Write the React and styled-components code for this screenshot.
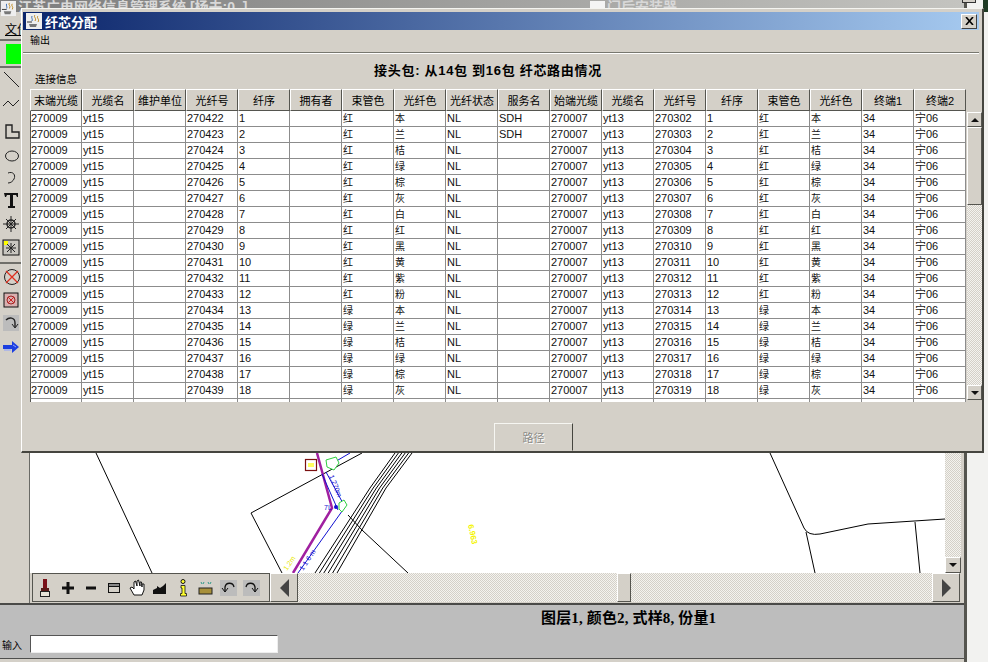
import React from 'react';
import styled, { createGlobalStyle } from 'styled-components';

const SANS = '"Liberation Sans", "Noto Sans CJK SC", sans-serif';
const FACE = '#d4d0c8';

const GlobalStyle = createGlobalStyle`
  html, body { margin: 0; padding: 0; background: #f2f2f0; }
  * { box-sizing: border-box; }
`;

const Desktop = styled.div`
  position: relative;
  width: 988px;
  height: 662px;
  overflow: hidden;
  background: #f2f2f0;
  font-family: ${SANS};
  color: #000;
`;

const MainWindow = styled.div`
  width: 967px;
  height: 662px;
  display: flex;
  flex-direction: column;
  background: ${FACE};
  border-right: 3px solid #55554f;
`;

const MainTitle = styled.div`
  position: relative;
  height: 12px;
  flex: none;
  display: flex;
  align-items: flex-start;
  padding: 1px 0 0 18px;
  background: linear-gradient(90deg, #7d7d7d, #c4c4c0);
  color: #d8d8d8;
  font-size: 14px;
  line-height: 12px;
  font-weight: bold;
  white-space: nowrap;
`;

const TitleSpan = styled.span`
  width: 572px;
  flex: none;
`;

const BackWindowIcon = styled.span`
  width: 15px;
  height: 8px;
  margin-right: 2px;
  flex: none;
  background: #f4f4f4;
`;

const AppIcon = styled.span`
  position: absolute;
  left: 1px;
  top: 1px;
  display: flex;
`;

const TopButton = styled.div`
  position: absolute;
  left: 962px;
  top: -11px;
  width: 14px;
  height: 14px;
  background: ${FACE};
  border: 1px solid #333;
`;

const DesktopCorner = styled.div`
  position: absolute;
  right: 0;
  top: 0;
  width: 5px;
  height: 12px;
  background: #1e3a24;
`;

const Body = styled.div`
  flex: 1;
  display: flex;
  min-height: 0;
`;

const ToolColumn = styled.div`
  width: 30px;
  flex: none;
  display: flex;
  flex-direction: column;
  align-items: flex-start;
  background: ${FACE};
  border-right: 1px solid #6a6a66;
`;

const MenuStub = styled.div`
  width: 22px;
  height: 27px;
  padding: 11px 0 0 5px;
  overflow: hidden;
  white-space: nowrap;
  font-size: 12px;
  line-height: 14px;
  text-decoration: underline;
`;

const ToolSep = styled.div`
  width: 21px;
  height: 2px;
  margin-top: ${(p) => p.$gap || 0}px;
  background: #6f6f6a;
`;

const Swatch = styled.div`
  width: 15px;
  height: 20px;
  margin: 3px 0 2px 6px;
  background: #00ff00;
`;

const ToolIcon = styled.div`
  width: 22px;
  height: 18px;
  flex: none;
  margin-top: ${(p) => p.$gap}px;
  display: flex;
  align-items: center;
  justify-content: center;
`;

const Workspace = styled.div`
  flex: 1;
  min-width: 0;
  display: flex;
  flex-direction: column;
  background: ${FACE};
`;

const MapRow = styled.div`
  flex: 1;
  min-height: 0;
  display: flex;
`;

const MapCanvas = styled.svg`
  width: 915px;
  height: 100%;
  flex: none;
  display: block;
  background: #fff;
`;

const Dither = styled.div`
  background-color: #e4e2dc;
  background-image: repeating-conic-gradient(#d4d0c8 0 25%, #f4f3ef 0 50%);
  background-size: 2px 2px;
`;

const VTrack = styled(Dither)`
  width: 16px;
  flex: none;
  display: flex;
  flex-direction: column;
  justify-content: flex-end;
`;

const BevelButton = styled.div`
  width: ${(p) => p.$w}px;
  height: ${(p) => p.$h}px;
  flex: none;
  display: flex;
  align-items: center;
  justify-content: center;
  background: ${FACE};
  border: 1px solid;
  border-color: #fff #55554f #55554f #fff;
`;

const BottomRow = styled.div`
  height: 30px;
  flex: none;
  display: flex;
  padding-left: 2px;
  background: ${FACE};
`;

const FloatBar = styled.div`
  width: 238px;
  height: 29px;
  flex: none;
  display: flex;
  align-items: center;
  background: ${FACE};
  border: 1px solid #55554f;
`;

const BarIcon = styled.div`
  width: 23px;
  height: 22px;
  flex: none;
  display: flex;
  align-items: center;
  justify-content: center;
`;

const HTrack = styled(Dither)`
  width: 634px;
  height: 29px;
  flex: none;
  position: relative;
`;

const HThumb = styled.div`
  position: absolute;
  left: 319px;
  top: 0;
  width: 14px;
  height: 29px;
  background: ${FACE};
  border: 1px solid;
  border-color: #fff #55554f #55554f #fff;
`;

const StatusBar = styled.div`
  height: 56px;
  flex: none;
  display: flex;
  flex-direction: column;
  background: #bdbdbd;
  border-top: 2px solid #4a4a48;
  border-bottom: 1px solid #4f4f4d;
`;

const StatusFooter = styled.div`
  height: 3px;
  flex: none;
  background: ${FACE};
`;

const StatusText = styled.div`
  height: 30px;
  padding: 3px 0 0 541px;
  font-family: "Liberation Serif", "Noto Sans CJK SC", serif;
  font-size: 15px;
  line-height: 20px;
  font-weight: bold;
  letter-spacing: 0.15px;
  white-space: nowrap;
`;

const InputRow = styled.div`
  display: flex;
  align-items: center;
  padding-left: 2px;
  font-size: 10px;
`;

const InputLabel = styled.span`
  width: 28px;
  flex: none;
`;

const CommandInput = styled.input`
  width: 248px;
  height: 18px;
  padding: 0;
  background: #fff;
  border: 1px solid;
  border-color: #555 #eee #eee #555;
  outline: none;
`;

/* dialog floats over the main window */
const Dialog = styled.div`
  position: absolute;
  left: 21px;
  top: 8px;
  width: 963px;
  height: 445px;
  display: flex;
  flex-direction: column;
  padding: 3px 3px 2px 1px;
  background: ${FACE};
  border-top: 1px solid #f4f4f0;
  border-left: 1px solid #fff;
  border-right: 2px solid #45453f;
  border-bottom: 2px solid #45453f;
`;

const DialogTitle = styled.div`
  height: 18px;
  flex: none;
  display: flex;
  align-items: center;
  gap: 3px;
  padding: 0 2px 0 3px;
  color: #fff;
  font-size: 13px;
  font-weight: bold;
  background: linear-gradient(90deg, #0a246a, #a6caf0);
`;

const TitleText = styled.span`
  flex: 1;
`;

const CloseButton = styled.div`
  width: 16px;
  height: 15px;
  display: flex;
  align-items: center;
  justify-content: center;
  background: ${FACE};
  border: 1px solid;
  border-color: #fff #404040 #404040 #fff;
`;

const DialogMenu = styled.div`
  height: 23px;
  flex: none;
  padding: 4px 0 0 7px;
  font-size: 10px;
  line-height: 14px;
  border-bottom: 1px solid #77776f;
  box-shadow: 0 1px 0 #fff;
`;

const Heading = styled.div`
  height: 36px;
  flex: none;
  position: relative;
  padding: 10px 26px 0 0;
  text-align: center;
  font-size: 13px;
  line-height: 16px;
  font-weight: bold;
  letter-spacing: 0.7px;
`;

const LinkLabel = styled.span`
  position: absolute;
  left: 12px;
  top: 18px;
  font-size: 10.500px;
  font-weight: normal;
  letter-spacing: 0;
`;

const TableArea = styled.div`
  margin-left: 7px;
  height: 313px;
  flex: none;
  display: flex;
`;

const TableClip = styled.div`
  width: 936px;
  height: 313px;
  flex: none;
  overflow: hidden;
  background: #fff;
`;

const GridRow = styled.div`
  display: grid;
  grid-template-columns: repeat(18, 52px);
  height: ${(p) => p.$h}px;
`;

const HeaderCell = styled.div`
  display: flex;
  align-items: center;
  justify-content: center;
  font-size: 11px;
  white-space: nowrap;
  overflow: hidden;
  background: ${FACE};
  border: 1px solid;
  border-color: #fff #55554f #55554f #fff;
`;

const Cell = styled.div`
  padding-left: 1px;
  font-size: ${(p) => (p.$cjk ? 10 : 11)}px;
  line-height: 15px;
  white-space: nowrap;
  overflow: hidden;
  color: #111;
  border-right: 1px solid #8c8c8c;
  border-bottom: 1px solid #8c8c8c;
  &:first-child {
    padding-left: 0;
    border-left: 1px solid #55554f;
  }
`;

const ScrollColumn = styled.div`
  width: 15px;
  height: 311px;
  margin-left: 1px;
  flex: none;
  display: flex;
  flex-direction: column;
  padding-top: 23px;
`;

const ScrollThumb = styled.div`
  height: 78px;
  flex: none;
  background: ${FACE};
  border: 1px solid;
  border-color: #fff #55554f #55554f #fff;
`;

const ScrollRest = styled(Dither)`
  flex: 1;
`;

const ButtonBar = styled.div`
  flex: 1;
  display: flex;
  justify-content: flex-start;
  padding: 21px 0 0 471px;
`;

const DisabledButton = styled.div`
  width: 79px;
  height: 28px;
  display: flex;
  align-items: center;
  justify-content: center;
  font-size: 11px;
  color: #8a8a86;
  text-shadow: 1px 1px 0 #fff;
  background: ${FACE};
  border: 1px solid;
  border-color: #f6f6f2 #45453f ${FACE} #f6f6f2;
`;

const Tri = ({ dir, size = 5, color = '#111' }) => {
  const points = {
    up: `0,${size} ${size},0 ${size * 2},${size}`,
    down: `0,0 ${size * 2},0 ${size},${size}`,
    left: `${size},0 ${size},${size * 2} 0,${size}`,
    right: `0,0 0,${size * 2} ${size},${size}`,
  }[dir];
  const wide = dir === 'up' || dir === 'down';
  return (
    <svg width={wide ? size * 2 : size} height={wide ? size : size * 2}>
      <polygon points={points} fill={color} />
    </svg>
  );
};

const JavaCup = ({ size = 16 }) => (
  <svg width={size} height={size} viewBox="0 0 16 16">
    <rect width="16" height="16" fill="#eee" />
    <path d="M3 11h8l-1 3H4z" fill="#777" />
    <path d="M1 9h5" stroke="#333" />
    <path d="M9 2c-2 2 2 3 0 6M12 3c-2 2 2 3 0 6" stroke="#c08a20" fill="none" />
    <path d="M6 3c-1 2 1 3 0 5" stroke="#3a6ab0" fill="none" />
  </svg>
);

const S = { fill: 'none', stroke: '#222', strokeWidth: 1 };

const sideTools = [
  [3, <svg width="18" height="18" key="line"><path d="M2 1l15 15" {...S} /></svg>],
  [5, <svg width="18" height="18" key="wave"><path d="M1 12l5-5 5 5 6-6" {...S} /></svg>],
  [11, <svg width="18" height="18" key="poly"><path d="M4 2h6v7h7v6H4z" {...S} strokeWidth="1.4" /></svg>],
  [6, <svg width="18" height="18" key="oval"><ellipse cx="10" cy="9" rx="6.5" ry="5" {...S} /></svg>],
  [4, <svg width="18" height="18" key="arc"><path d="M6 4c5-2 8 2 6 6-1 2-3 4-6 4" {...S} /></svg>],
  [4, <svg width="18" height="18" key="text">
    <path d="M2 2h14v4h-1l-1-2h-3v11h2v2H6v-2h2V4H5L4 6H3z" fill="#111" />
  </svg>],
  [6, <svg width="18" height="18" key="star">
    <circle cx="9" cy="9" r="4" {...S} strokeWidth="1.5" />
    <path d="M9 1v16M1 9h16M4 4l10 10M14 4L4 14" {...S} />
  </svg>],
  [6, <svg width="18" height="18" key="boxstar">
    <rect x="1" y="1" width="16" height="15" fill="#c8c6c0" stroke="#111" />
    <rect x="2" y="2" width="4" height="4" fill="#ffff00" />
    <path d="M9 4v10M4 9h10M5 5l8 8M13 5l-8 8" {...S} />
  </svg>],
];

const sideTools2 = [
  [4, <svg width="18" height="18" key="redx">
    <circle cx="10" cy="9" r="7.500" {...S} />
    <path d="M4 3l12 12M16 3L4 15" fill="none" stroke="#e03020" strokeWidth="1.3" />
  </svg>],
  [5, <svg width="18" height="18" key="boxx">
    <rect x="2" y="2" width="14" height="14" fill="#d8b0b0" stroke="#111" />
    <circle cx="9" cy="9" r="4" fill="none" stroke="#a02020" />
    <path d="M6 6l6 6M12 6l-6 6" fill="none" stroke="#d02020" />
  </svg>],
  [5, <svg width="18" height="18" key="redo">
    <rect x="1" y="1" width="16" height="16" fill="#bcbcbc" />
    <path d="M4 6c3-3 9-3 9 3v4" {...S} strokeWidth="1.4" />
    <path d="M10 10l3 4 3-4" {...S} />
  </svg>],
  [6, <svg width="18" height="14" key="arrow">
    <path d="M1 5h9V1l7 6-7 6V9H1z" fill="#1c3fe0" />
    <path d="M2 10h7M11 5l3 2" stroke="#8ca0ff" />
  </svg>],
];

const barTools = [
  <svg width="10" height="20" key="brush">
    <rect x="3" y="1" width="4" height="9" fill="#7a1018" />
    <rect x="1" y="10" width="8" height="3" fill="#5a1a18" />
    <rect x="0.500" y="13.500" width="9" height="5" fill="#e8e4d8" stroke="#222" />
  </svg>,
  <svg width="14" height="14" key="plus"><path d="M7 1v12M1 7h12" stroke="#111" strokeWidth="3" /></svg>,
  <svg width="14" height="14" key="minus"><path d="M2 7h10" stroke="#111" strokeWidth="3" /></svg>,
  <svg width="14" height="14" key="window">
    <rect x="1.500" y="2.500" width="11" height="9" fill="none" stroke="#111" />
    <rect x="1.500" y="2.500" width="11" height="3" fill="#888" stroke="#111" />
  </svg>,
  <svg width="18" height="18" key="hand">
    <path d="M6 16L2 9l2-1 2 2V3l1.500-1L9 7V2l1.500-1L12 7V3l1.500 0L14 8V5l2 0v6l-2 5z" fill="#fff" stroke="#111" />
  </svg>,
  <svg width="15" height="14" key="chart"><path d="M1 13V9l4-2v-2l3 2 3-2 3-3v11z" fill="#111" /></svg>,
  <svg width="10" height="18" key="info">
    <circle cx="5" cy="2.500" r="2" fill="#ffff30" stroke="#111" />
    <path d="M3 6.500h4v8h1.500v2.500h-6v-2.500H4V9H3z" fill="#ffff30" stroke="#111" strokeWidth="0.8" />
  </svg>,
  <svg width="15" height="16" key="ruler">
    <path d="M3 2l1 2M6 2L5 4M10 2l1 2M13 2l-1 2" stroke="#2f9a8a" />
    <rect x="1" y="8" width="13" height="6" fill="#a8903a" stroke="#222" />
  </svg>,
  <svg width="19" height="19" key="undo">
    <rect x="1" y="2" width="17" height="16" fill="#bcbcbc" />
    <path d="M6 14V9c1-5 8-5 9 0" fill="none" stroke="#111" strokeWidth="1.3" />
    <path d="M3 10l3 4 3-4" fill="none" stroke="#111" />
  </svg>,
  <svg width="19" height="19" key="redo">
    <rect x="1" y="2" width="17" height="16" fill="#bcbcbc" />
    <path d="M13 14V9c-1-5-8-5-9 0" fill="none" stroke="#111" strokeWidth="1.3" />
    <path d="M10 10l3 4 3-4" fill="none" stroke="#111" />
  </svg>,
];

const headers = ['末端光缆', '光缆名', '维护单位', '光纤号', '纤序', '拥有者', '束管色', '光纤色', '光纤状态', '服务名', '始端光缆', '光缆名', '光纤号', '纤序', '束管色', '光纤色', '终端1', '终端2'];
const fibreColors = ['本', '兰', '桔', '绿', '棕', '灰', '白', '红', '黑', '黄', '紫', '粉'];

const rows = Array.from({ length: 18 }, (_, i) => {
  const tube = i < 12 ? '红' : '绿';
  const colour = fibreColors[i % 12];
  return [
    '270009', 'yt15', '', String(270422 + i), String(i + 1), '', tube, colour, 'NL',
    i < 2 ? 'SDH' : '', '270007', 'yt13', String(270302 + i), String(i + 1), tube, colour, '34', '宁06',
  ];
});

const CJK_COLS = [6, 7, 14, 15];

// cable bundle, six parallel lines
const bundle = [0, 1, 2, 3, 4, 5].map((i) => (
  `M${395 + i * 3.4} 453L${370 + i * 3.2} 488L${315 + i * 4.4} 573`
));

const App = () => (
  <Desktop>
    <GlobalStyle />
    <DesktopCorner />
    <MainWindow>
      <MainTitle>
        <AppIcon><JavaCup size={15} /></AppIcon>
        <TitleSpan>江苏广电网络信息管理系统 [杨夫:0..]</TitleSpan>
        <BackWindowIcon />
        <span>门后安装器</span>
        <TopButton />
      </MainTitle>
      <Body>
        <ToolColumn>
          <MenuStub>文件</MenuStub>
          <ToolSep />
          <Swatch />
          <ToolSep />
          {sideTools.map(([gap, icon], i) => (
            <ToolIcon key={i} $gap={gap}>{icon}</ToolIcon>
          ))}
          <ToolSep $gap={5} />
          {sideTools2.map(([gap, icon], i) => (
            <ToolIcon key={i} $gap={gap}>{icon}</ToolIcon>
          ))}
        </ToolColumn>
        <Workspace>
          <MapRow>
            <MapCanvas viewBox="30 12 915 561" preserveAspectRatio="none">
              <g fill="none" stroke="#000" strokeWidth="1">
                <path d="M96 453L152 573" />
                <path d="M362 453L251 513L282 573" />
                <path d="M348 515L362 530L408 573" />
                <path d="M770 453L804 528Q808 536 820 534L868 524L945 519" />
                <path d="M806 532L815 573" />
                <path d="M915 522L920 573" />
                {bundle.map((d) => <path key={d} d={d} />)}
              </g>
              <path d="M317 453L332 508L293 573" fill="none" stroke="#a020a0" strokeWidth="2.5" />
              <g fill="none" stroke="#1010d0" strokeWidth="1">
                <path d="M326 472L345 507L298 573" />
                <path d="M322 474L338 510" />
                <path d="M333 463L350 453" />
              </g>
              <rect x="305.500" y="459.500" width="11" height="11" fill="#fff" stroke="#7a1010" strokeWidth="1.200" />
              <rect x="308" y="463" width="6" height="4" fill="#ffff60" />
              <g fill="#fff" stroke="#30d040" strokeWidth="1">
                <path d="M326 460l10-3 3 6-5 7-7-3z" />
                <path d="M339 503l5-3 3 5-5 7-3-3z" />
              </g>
              <circle cx="336" cy="507" r="2" fill="#1010d0" />
              <text x="324" y="510" fontSize="7" fill="#1010d0" fontFamily={SANS}>7L</text>
              <text x="0" y="0" fontSize="7" fill="#1010d0" fontFamily={SANS} transform="translate(329 476) rotate(68)">1.270m</text>
              <text x="0" y="0" fontSize="7" fill="#1010d0" fontFamily={SANS} transform="translate(303 571) rotate(-56)">1 1 6 m</text>
              <text x="0" y="0" fontSize="7" fill="#e8e800" fontFamily={SANS} transform="translate(287 571) rotate(-56)">1.2m</text>
              <text x="0" y="0" fontSize="8" fontWeight="bold" fill="#f4f400" fontFamily={SANS} transform="translate(468 525) rotate(78)">6.963</text>
            </MapCanvas>
            <VTrack>
              <BevelButton $w={16} $h={16}><Tri dir="down" size={4} /></BevelButton>
            </VTrack>
          </MapRow>
          <BottomRow>
            <FloatBar>
              {barTools.map((icon, i) => (
                <BarIcon key={i}>{icon}</BarIcon>
              ))}
            </FloatBar>
            <BevelButton $w={28} $h={29}><Tri dir="left" size={9} color="#444" /></BevelButton>
            <HTrack><HThumb /></HTrack>
            <BevelButton $w={28} $h={29}><Tri dir="right" size={9} color="#444" /></BevelButton>
          </BottomRow>
        </Workspace>
      </Body>
      <StatusBar>
        <StatusText>图层1, 颜色2, 式样8, 份量1</StatusText>
        <InputRow>
          <InputLabel>输入</InputLabel>
          <CommandInput readOnly />
        </InputRow>
      </StatusBar>
      <StatusFooter />
    </MainWindow>

    <Dialog>
      <DialogTitle>
        <JavaCup />
        <TitleText>纤芯分配</TitleText>
        <CloseButton>
          <svg width="9" height="8"><path d="M1 0l7 8M8 0L1 8" stroke="#000" strokeWidth="1.6" /></svg>
        </CloseButton>
      </DialogTitle>
      <DialogMenu>输出</DialogMenu>
      <Heading>
        <LinkLabel>连接信息</LinkLabel>
        接头包: 从14包 到16包 纤芯路由情况
      </Heading>
      <TableArea>
        <TableClip>
          <GridRow $h={22}>
            {headers.map((h, i) => (
              <HeaderCell key={i}>{h}</HeaderCell>
            ))}
          </GridRow>
          {rows.map((row, r) => (
            <GridRow key={r} $h={16}>
              {row.map((value, c) => (
                <Cell key={c} $cjk={CJK_COLS.includes(c)}>{value}</Cell>
              ))}
            </GridRow>
          ))}
          <GridRow $h={16}>
            {headers.map((h, i) => (
              <Cell key={i} />
            ))}
          </GridRow>
        </TableClip>
        <ScrollColumn>
          <BevelButton $w={15} $h={15}><Tri dir="up" size={4} /></BevelButton>
          <ScrollThumb />
          <ScrollRest />
          <BevelButton $w={15} $h={15}><Tri dir="down" size={4} /></BevelButton>
        </ScrollColumn>
      </TableArea>
      <ButtonBar>
        <DisabledButton>路径</DisabledButton>
      </ButtonBar>
    </Dialog>
  </Desktop>
);

export default App;
